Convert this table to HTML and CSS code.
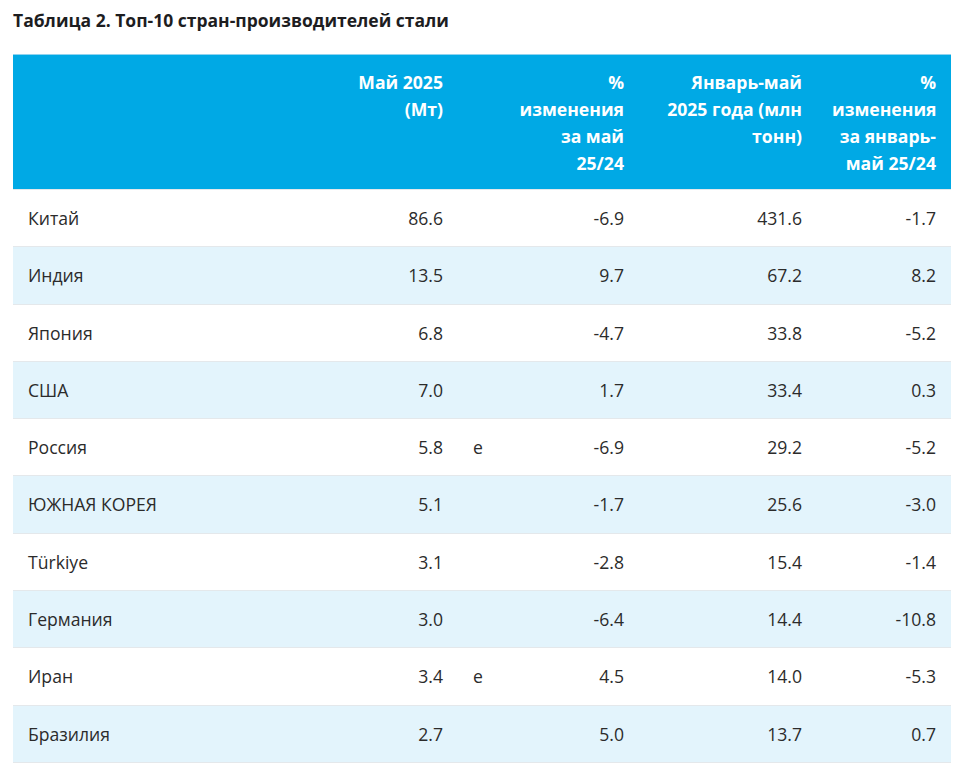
FILE: index.html
```html
<!DOCTYPE html>
<html lang="ru">
<head>
<meta charset="utf-8">
<link rel="stylesheet" href="styles.css">
</head>
<body>
<div class="page">
  <h2 class="title">Таблица 2. Топ-10 стран-производителей стали</h2>
  <table class="steel">
    <colgroup>
      <col class="c-name">
      <col class="c-may">
      <col class="c-flag">
      <col class="c-pct">
      <col class="c-ytd">
      <col class="c-ytdpct">
    </colgroup>
    <thead>
      <tr>
        <th></th>
        <th class="num">Май 2025<br>(Мт)</th>
        <th></th>
        <th class="num">%<br>изменения<br>за май<br>25/24</th>
        <th class="num">Январь-май<br>2025 года (млн<br>тонн)</th>
        <th class="num">%<br>изменения<br>за январь-<br>май 25/24</th>
      </tr>
    </thead>
    <tbody>
      <tr><td>Китай</td><td class="num">86.6</td><td></td><td class="num">-6.9</td><td class="num">431.6</td><td class="num">-1.7</td></tr>
      <tr><td>Индия</td><td class="num">13.5</td><td></td><td class="num">9.7</td><td class="num">67.2</td><td class="num">8.2</td></tr>
      <tr><td>Япония</td><td class="num">6.8</td><td></td><td class="num">-4.7</td><td class="num">33.8</td><td class="num">-5.2</td></tr>
      <tr><td>США</td><td class="num">7.0</td><td></td><td class="num">1.7</td><td class="num">33.4</td><td class="num">0.3</td></tr>
      <tr><td>Россия</td><td class="num">5.8</td><td>e</td><td class="num">-6.9</td><td class="num">29.2</td><td class="num">-5.2</td></tr>
      <tr><td>ЮЖНАЯ КОРЕЯ</td><td class="num">5.1</td><td></td><td class="num">-1.7</td><td class="num">25.6</td><td class="num">-3.0</td></tr>
      <tr><td>Türkiye</td><td class="num">3.1</td><td></td><td class="num">-2.8</td><td class="num">15.4</td><td class="num">-1.4</td></tr>
      <tr><td>Германия</td><td class="num">3.0</td><td></td><td class="num">-6.4</td><td class="num">14.4</td><td class="num">-10.8</td></tr>
      <tr><td>Иран</td><td class="num">3.4</td><td>e</td><td class="num">4.5</td><td class="num">14.0</td><td class="num">-5.3</td></tr>
      <tr><td>Бразилия</td><td class="num">2.7</td><td></td><td class="num">5.0</td><td class="num">13.7</td><td class="num">0.7</td></tr>
    </tbody>
  </table>
</div>
</body>
</html>
```
FILE: styles.css
```css
html, body {
  margin: 0;
  padding: 0;
  background: #ffffff;
}
body {
  font-family: "Open Sans", "Noto Sans", "DejaVu Sans", sans-serif;
  color: #2b2b2b;
}
.page {
  padding: 8px 13px 0 13px;
}
.title {
  margin: 0 0 22px 0;
  font-size: 17.5px;
  line-height: 24px;
  font-weight: 700;
  color: #1d1d1f;
}
.steel {
  width: 938px;
  border-collapse: collapse;
  table-layout: fixed;
  font-size: 17.6px;
}
.c-name { width: 287px; }
.c-may { width: 158px; }
.c-flag { width: 42px; }
.c-pct { width: 139px; }
.c-ytd { width: 178px; }
.c-ytdpct { width: 134px; }
.steel thead tr {
  background: #00a9e5;
  border-top: 1px solid #8fd3ef;
}
.steel th {
  color: #ffffff;
  font-weight: 700;
  line-height: 27px;
  padding: 14px 15px 12px 15px;
  vertical-align: top;
  text-align: left;
}
.steel td {
  padding: 16px 15px;
  line-height: 24.3px;
  vertical-align: middle;
  text-align: left;
}
.steel tbody tr {
  border-top: 1px solid #e4e8eb;
}
.steel tbody tr:last-child {
  border-bottom: 1px solid #e4e8eb;
}
.steel tbody tr:nth-child(even) {
  background: #e3f4fc;
}
.steel .num {
  text-align: right;
}
```
